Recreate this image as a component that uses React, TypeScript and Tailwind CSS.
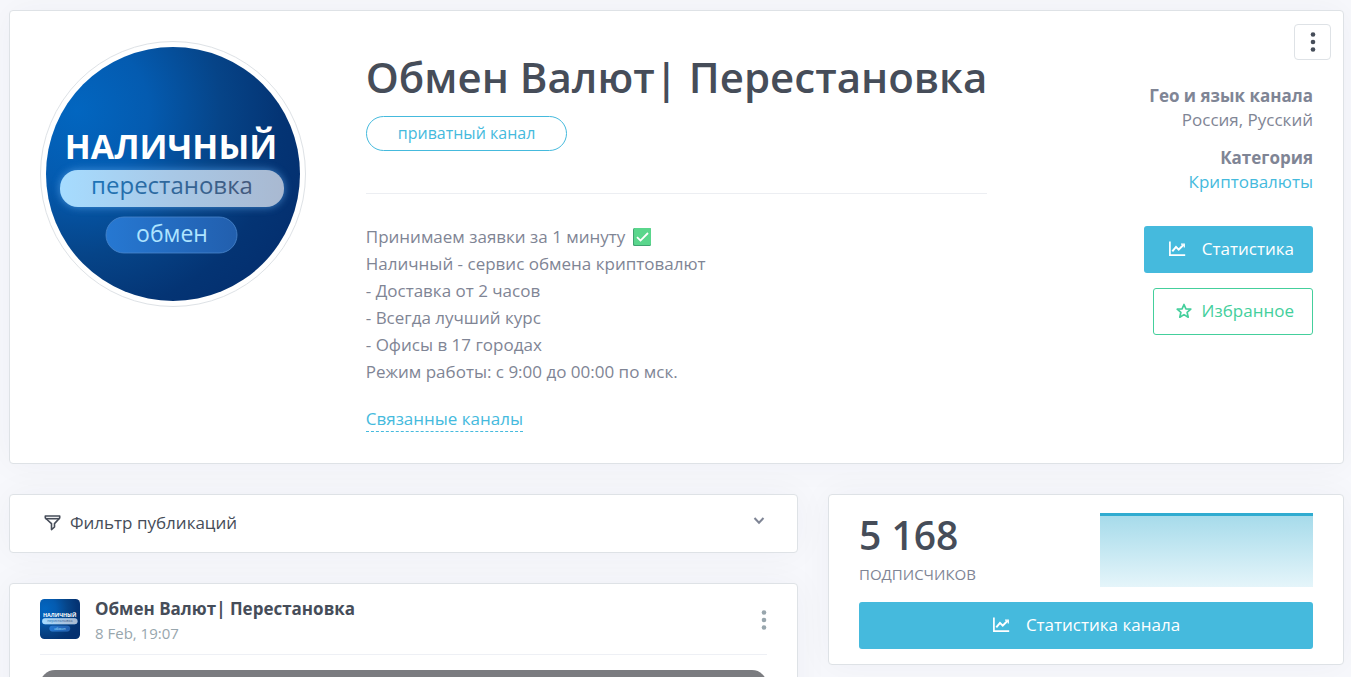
import React from "react";

const sans = "font-['Open_Sans','Noto_Sans',sans-serif]";
const card =
  "rounded border border-[#dee2e6] bg-white shadow-[0_0_35px_0_rgba(35,38,69,0.045)]";

function Logo({ className, round }: { className: string; round?: boolean }) {
  const id = round ? "round" : "square";
  return (
    <svg viewBox="0 0 254 254" className={className} role="img" aria-label="Наличный">
      <defs>
        <radialGradient id={`${id}-bg`} cx="0.12" cy="0.25" r="0.95">
          <stop offset="0" stopColor="#0266c0" />
          <stop offset="0.3" stopColor="#045bb0" />
          <stop offset="0.6" stopColor="#064488" />
          <stop offset="0.85" stopColor="#043474" />
          <stop offset="1" stopColor="#043070" />
        </radialGradient>
        <linearGradient id={`${id}-pill`}>
          <stop offset="0" stopColor="#a6dcff" />
          <stop offset="0.5" stopColor="#a8c8e6" />
          <stop offset="1" stopColor="#a9b9d1" />
        </linearGradient>
        <linearGradient id={`${id}-word`}>
          <stop offset="0" stopColor="#1d74b8" />
          <stop offset="1" stopColor="#44597c" />
        </linearGradient>
        <linearGradient id={`${id}-low`}>
          <stop offset="0" stopColor="#2678d2" />
          <stop offset="1" stopColor="#225fae" />
        </linearGradient>
        <filter id={`${id}-glow`} x="-20%" y="-50%" width="140%" height="200%">
          <feGaussianBlur stdDeviation="4" />
        </filter>
        <clipPath id={`${id}-clip`}>
          {round ? <circle cx="127" cy="127" r="127" /> : <rect width="254" height="254" rx="28" />}
        </clipPath>
      </defs>
      <g clipPath={`url(#${id}-clip)`}>
        <rect width="254" height="254" fill={`url(#${id}-bg)`} />
        <rect x="14" y="123" width="224" height="37" rx="18" fill="#5da8ec" opacity="0.7" filter={`url(#${id}-glow)`} />
        <rect x="14" y="123" width="224" height="37" rx="18" fill={`url(#${id}-pill)`} />
        <rect x="60" y="170" width="131" height="36" rx="18" fill={`url(#${id}-low)`} stroke="#4a86cc" strokeWidth="0.8" />
        <g textAnchor="middle" className={sans}>
          <text x="125" y="112" fontSize="34" fontWeight="700" fill="#fff">НАЛИЧНЫЙ</text>
          <text x="126" y="147" fontSize="24" fill={`url(#${id}-word)`}>перестановка</text>
          <text x="126" y="195" fontSize="23" fill="#aee4ff">обмен</text>
        </g>
      </g>
    </svg>
  );
}

function ChartIcon() {
  return (
    <svg viewBox="0 0 18 18" className="size-[18px]" fill="none" stroke="currentColor" strokeWidth="1.7" aria-hidden="true">
      <path d="M1.9 1.5V15.2H17.2" />
      <path d="M4.3 11.3L8 6.9L10.7 9.6L15.6 4.7" strokeWidth="2" />
      <path d="M13 4.2H16.3V7.4" strokeWidth="1.2" />
    </svg>
  );
}

function StarIcon() {
  return (
    <svg viewBox="0 0 16 16" className="size-4" fill="none" stroke="currentColor" strokeWidth="1.7" strokeLinejoin="round" aria-hidden="true">
      <path d="M8 1.5L9.9 5.8L14.8 6.2L11.1 9.3L12.2 14.2L8 11.6L3.8 14.2L4.9 9.3L1.2 6.2L6.1 5.8Z" />
    </svg>
  );
}

function Dots() {
  return (
    <svg viewBox="0 0 6 20" className="h-5 w-[6px]" fill="currentColor" aria-hidden="true">
      <circle cx="3" cy="2.5" r="2.3" />
      <circle cx="3" cy="10" r="2.3" />
      <circle cx="3" cy="17.5" r="2.3" />
    </svg>
  );
}

function CheckMark() {
  return (
    <svg viewBox="0 0 18 18" className="ml-[3px] inline-block size-[18px] align-[-3px]" role="img" aria-label="✅">
      <rect width="18" height="18" rx="1.5" fill="#3fa371" />
      <rect x="1" width="17" height="17" rx="1" fill="#5ad68c" />
      <path d="M4 9.2L7.5 12.6L15 5" fill="none" stroke="#fff" strokeWidth="1.8" />
    </svg>
  );
}

const lines = [
  "Наличный - сервис обмена криптовалют",
  "- Доставка от 2 часов",
  "- Всегда лучший курс",
  "- Офисы в 17 городах",
  "Режим работы: с 9:00 до 00:00 по мск.",
];

export default function App() {
  return (
    <div className={`h-screen overflow-hidden bg-[#f7f8fc] pt-[10px] pr-[7px] pl-[9px] text-[17px] text-[#7f8595] ${sans}`}>
      <section className={`relative grid grid-cols-12 gap-x-[30px] p-[30px] ${card}`}>
        <div className="col-span-3">
          <div className="w-full max-w-[266px] rounded-full border border-[#dee2e6] p-[5px]">
            <Logo round className="block w-full" />
          </div>
        </div>
        <div className="col-span-6">
          <h1 className="pt-2 text-[42px] leading-[56px] font-semibold whitespace-nowrap text-[#464d59]">
            Обмен Валют| Перестановка
          </h1>
          <div className="mt-[11px] flex h-[35px] w-fit items-center rounded-full border border-[#45badd] px-[31px] pb-[2px] text-base text-[#45badd]">
            приватный канал
          </div>
          <hr className="mt-[42px] border-[#eceef2]" />
          <p className="mt-[29px] leading-[27px]">
            Принимаем заявки за 1 минуту <CheckMark />
            {lines.map((l) => (
              <React.Fragment key={l}>
                <br />
                {l}
              </React.Fragment>
            ))}
          </p>
          <a href="#related" className="mt-[21px] mb-px block w-fit border-b border-dashed border-[#45badd] leading-[25px] text-[#45badd]">
            Связанные каналы
          </a>
        </div>
        <div className="col-span-3 flex flex-col items-end pt-[43px] text-right">
          <div className="leading-6">
            <div className="font-bold">Гео и язык канала</div>
            <div>Россия, Русский</div>
          </div>
          <div className="mt-[14px] leading-6">
            <div className="font-bold">Категория</div>
            <a href="#crypto" className="text-[#45badd]">Криптовалюты</a>
          </div>
          <a href="#stats" className="mt-8 flex h-[47px] items-center gap-4 rounded-[3px] bg-[#45badd] pr-[19px] pb-[2px] pl-6 text-white">
            <ChartIcon />
            Статистика
          </a>
          <button type="button" className="mt-[15px] flex h-[47px] items-center gap-[10px] rounded-[3px] border border-[#44cf9c] pr-[18px] pb-[2px] pl-[22px] text-[#44cf9c]">
            <StarIcon />
            Избранное
          </button>
        </div>
        <button type="button" aria-label="Меню" className="absolute top-[13px] right-3 flex h-9 w-[37px] items-center justify-center rounded border border-[#dee2e6] text-[#464d59]">
          <Dots />
        </button>
      </section>

      <div className="mt-[30px] grid grid-cols-5 items-start gap-x-[30px]">
        <div className="col-span-3 flex flex-col gap-[30px]">
          <button type="button" className={`flex h-[59px] items-center px-[34px] pb-[2px] text-[#464d59] ${card}`}>
            <svg viewBox="0 0 18 18" className="size-[18px]" fill="none" stroke="currentColor" strokeWidth="1.6" strokeLinejoin="round" aria-hidden="true">
              <path d="M1.3 2H15.7V4L10.5 9.6V13L7.5 15.6V9.6L1.3 4Z" />
              <path d="M1.5 4.7H15.5" />
            </svg>
            <span className="ml-2">Фильтр публикаций</span>
            <svg viewBox="0 0 12 12" className="-mt-1 -mr-[2px] ml-auto size-3 text-[#7f8595]" fill="none" stroke="currentColor" strokeWidth="2" aria-hidden="true">
              <path d="M1.5 3L6 7.8L10.5 3" />
            </svg>
          </button>
          <article className={`px-[30px] pt-[15px] ${card}`}>
            <header className="flex items-start border-b border-[#eef0f5] pb-[10px]">
              <Logo className="size-10" />
              <div className="ml-[15px]">
                <h2 className="leading-5 font-bold text-[#464d59]">Обмен Валют| Перестановка</h2>
                <div className="mt-1 text-[15px] leading-5 text-[#98a6ad]">8 Feb, 19:07</div>
              </div>
              <button type="button" aria-label="Действия" className="mt-[11px] mb-[14px] ml-auto text-[#98a6ad]">
                <Dots />
              </button>
            </header>
            <div className="mt-[15px] h-80 rounded-[15px] bg-[#7b7c80]" />
          </article>
        </div>
        <aside className={`col-span-2 px-[30px] pt-[18px] pb-[15px] ${card}`}>
          <div className="flex justify-between">
            <div>
              <div className="text-[39px] leading-[44px] font-semibold text-[#464d59]">5 168</div>
              <div className="mt-[7px] text-[15px] leading-5">ПОДПИСЧИКОВ</div>
            </div>
            <svg viewBox="0 0 213 74" preserveAspectRatio="none" className="h-[74px] w-[213px]" aria-hidden="true">
              <defs>
                <linearGradient id="area" x2="0" y2="1">
                  <stop offset="0" stopColor="#a4daea" />
                  <stop offset="1" stopColor="#e5f5fa" />
                </linearGradient>
              </defs>
              <rect width="213" height="74" fill="url(#area)" />
              <rect width="213" height="3" fill="#2fabd0" />
            </svg>
          </div>
          <a href="#channel-stats" className="mt-[15px] flex h-[47px] items-center justify-center gap-4 rounded-[3px] bg-[#45badd] pb-[2px] text-white">
            <ChartIcon />
            Статистика канала
          </a>
        </aside>
      </div>
    </div>
  );
}
